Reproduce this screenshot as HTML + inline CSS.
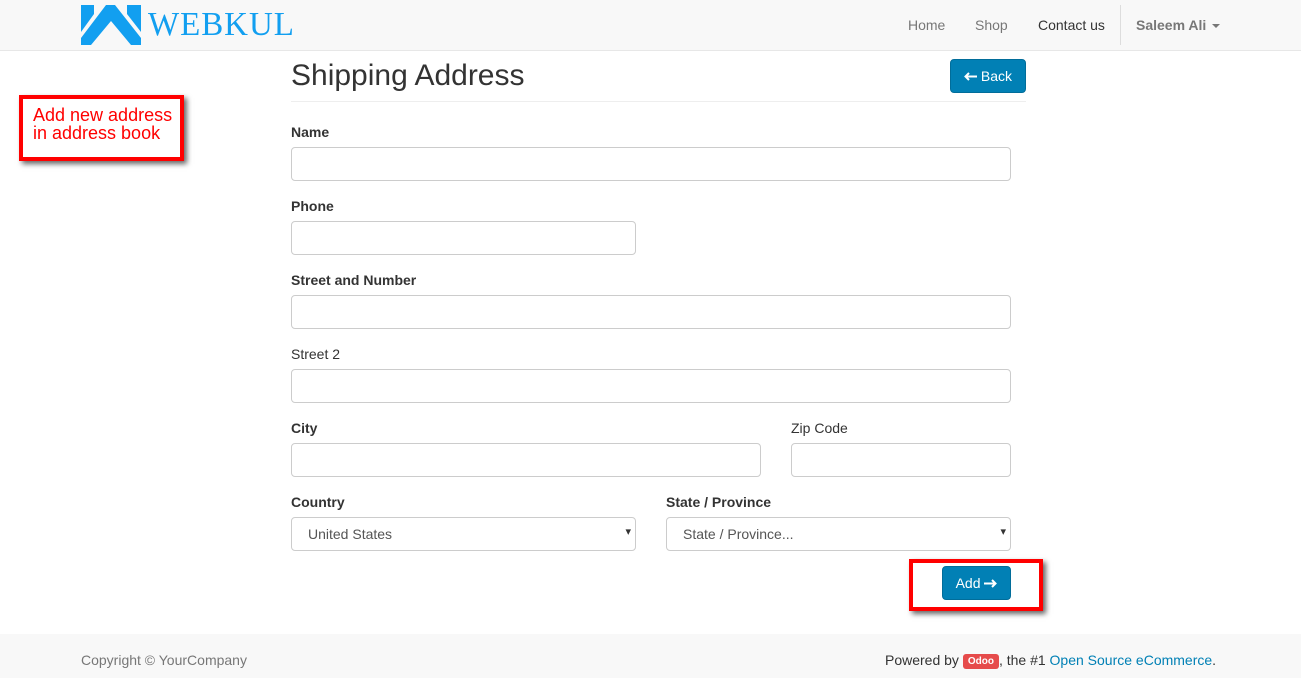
<!DOCTYPE html>
<html><head><meta charset="utf-8"><style>
*{box-sizing:border-box;margin:0;padding:0}
body{width:1301px;height:678px;position:relative;background:#fff;font-family:"Liberation Sans",sans-serif;color:#333;font-size:14px;overflow:hidden}
.nav{position:absolute;left:0;top:0;width:1301px;height:51px;background:#f8f8f8;border-bottom:1px solid #e7e7e7}
.nav a{position:absolute;top:17px;font-size:14px;color:#777}
.abs{position:absolute}
label{position:absolute;font-size:14px;font-weight:bold;color:#333}
label.n{font-weight:normal}
.in{position:absolute;height:34px;border:1px solid #ccc;border-radius:4px;background:#fff}
.sel{position:absolute;height:34px;border:1px solid #ccc;border-radius:4px;background:#fff;padding:8px 16px;font-size:14px;color:#555}
.sel:after{content:"▾";position:absolute;right:4px;top:7px;font-size:11px;color:#333}
.btn{position:absolute;background:#0180b5;border:1px solid #016d9a;border-radius:4px;color:#fff;font-size:14px;text-align:center}
.foot{position:absolute;left:0;top:634px;width:1301px;height:44px;background:#f8f8f8}
.red{position:absolute;border:4px solid #f00;box-shadow:3px 3px 5px rgba(0,0,0,.6)}
</style></head><body>
<div class="nav">
<svg class="abs" style="left:81px;top:5px" width="60" height="40" viewBox="0 0 60 40">
<polygon points="0,0 13,0 13,9 0,27" fill="#129ff0"/>
<polygon points="46,0 60,0 60,27 46,9" fill="#129ff0"/>
<polygon points="25,0 34,0 60,33 60,40 50,40 30,16 10,40 0,40 0,33" fill="#129ff0"/>
</svg>
<div class="abs" style="left:148px;top:6px;font-family:'Liberation Serif',serif;font-size:34px;color:#129ff0;transform:scaleX(0.97);transform-origin:left;letter-spacing:1px">WEBKUL</div>
<a style="left:908px">Home</a>
<a style="left:975px">Shop</a>
<a style="left:1038px;color:#333">Contact us</a>
<div class="abs" style="left:1120px;top:5px;width:1px;height:40px;background:#ddd"></div>
<a style="left:1136px;font-weight:bold">Saleem Ali <span style="display:inline-block;width:0;height:0;border-left:4px solid transparent;border-right:4px solid transparent;border-top:4px solid #777;vertical-align:middle;margin-left:2px"></span></a>
</div>
<div class="abs" style="left:291px;top:59px;font-size:30px;color:#333">Shipping Address</div>
<div class="btn" style="left:950px;top:59px;width:76px;height:34px;padding-top:8px"><svg width="13" height="9" viewBox="0 0 13 9" style="vertical-align:0"><path d="M13 4.5H3M5 1L1.5 4.5 5 8" stroke="#fff" stroke-width="2" fill="none"/></svg> Back</div>
<div class="abs" style="left:291px;top:101px;width:735px;height:1px;background:#eee"></div>
<label style="left:291px;top:124px">Name</label>
<div class="in" style="left:291px;top:147px;width:720px"></div>
<label style="left:291px;top:198px">Phone</label>
<div class="in" style="left:291px;top:221px;width:345px"></div>
<label style="left:291px;top:272px">Street and Number</label>
<div class="in" style="left:291px;top:295px;width:720px"></div>
<label class="n" style="left:291px;top:346px">Street 2</label>
<div class="in" style="left:291px;top:369px;width:720px"></div>
<label style="left:291px;top:420px">City</label>
<div class="in" style="left:291px;top:443px;width:470px"></div>
<label class="n" style="left:791px;top:420px">Zip Code</label>
<div class="in" style="left:791px;top:443px;width:220px"></div>
<label style="left:291px;top:494px">Country</label>
<div class="sel" style="left:291px;top:517px;width:345px">United States</div>
<label style="left:666px;top:494px">State / Province</label>
<div class="sel" style="left:666px;top:517px;width:345px">State / Province...</div>
<div class="btn" style="left:942px;top:566px;width:69px;height:34px;padding-top:8px">Add <svg width="13" height="9" viewBox="0 0 13 9" style="vertical-align:0"><path d="M0 4.5H10M8 1l3.5 3.5L8 8" stroke="#fff" stroke-width="2" fill="none"/></svg></div>
<div class="red" style="left:909px;top:559px;width:134px;height:52px"></div>
<div class="red" style="left:19px;top:95px;width:165px;height:66px"></div>
<div class="abs" style="left:33px;top:106px;color:#f00;font-size:18px;line-height:18px">Add new address<br>in address book</div>
<div class="foot">
<div class="abs" style="left:81px;top:18px;color:#777">Copyright © YourCompany</div>
<div class="abs" style="left:885px;top:18px;color:#333">Powered by <span style="background:#e64b4b;color:#fff;font-size:10px;font-weight:bold;padding:2px 5px;border-radius:3px;position:relative;top:-1px">Odoo</span>, the #1 <span style="color:#0180b5">Open Source eCommerce</span>.</div>
</div>
</body></html>
